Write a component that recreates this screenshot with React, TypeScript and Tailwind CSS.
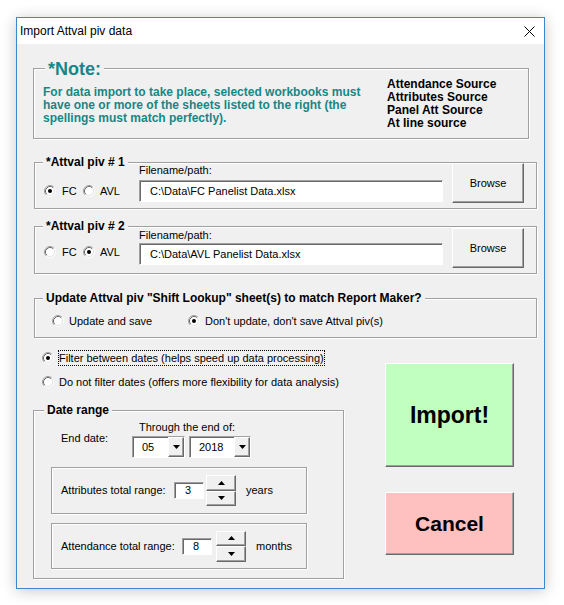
import React from "react";

const sunken =
  "border border-t-[#a0a0a0] border-l-[#a0a0a0] border-r-white border-b-white shadow-[inset_1px_1px_0_#696969]";
const raised =
  "border border-t-white border-l-white border-r-[#696969] border-b-[#696969] shadow-[inset_-1px_-1px_0_#a0a0a0]";
const etched = "border border-[#a0a0a0] shadow-[inset_1px_1px_0_#fff,1px_1px_0_#fff]";

function Radio({ checked = false }: { checked?: boolean }) {
  return (
    <svg width="12" height="12" viewBox="0 0 12 12" className="shrink-0">
      <circle cx="6" cy="6" r="4.5" fill="#fff" />
      <path d="M2.11 9.89 A5.5 5.5 0 0 1 9.89 2.11" fill="none" stroke="#a0a0a0" />
      <path d="M2.82 9.18 A4.5 4.5 0 0 1 9.18 2.82" fill="none" stroke="#696969" />
      <path d="M9.89 2.11 A5.5 5.5 0 0 1 2.11 9.89" fill="none" stroke="#ffffff" />
      <path d="M9.18 2.82 A4.5 4.5 0 0 1 2.82 9.18" fill="none" stroke="#e3e3e3" />
      {checked && <circle cx="6" cy="6" r="2" fill="#000" />}
    </svg>
  );
}

function Tri({ up = false }: { up?: boolean }) {
  return (
    <svg width="7" height="4" viewBox="0 0 7 4">
      <polygon points={up ? "0,4 7,4 3.5,0" : "0,0 7,0 3.5,4"} fill="#000" />
    </svg>
  );
}

function Combo({ value, width, pad }: { value: string; width: string; pad: string }) {
  return (
    <div className={`flex h-[22px] bg-white ${width} ${sunken}`}>
      <span className={`flex-1 leading-[20px] ${pad}`}>{value}</span>
      <div className={`flex h-full w-[16px] items-center justify-center bg-[#f0f0f0] ${raised}`}>
        <Tri />
      </div>
    </div>
  );
}

function Spin({ className }: { className: string }) {
  return (
    <div className={`flex h-[31px] w-[30px] flex-col ${className}`}>
      <div className={`flex flex-1 items-center justify-center bg-[#f0f0f0] ${raised}`}>
        <Tri up />
      </div>
      <div className={`flex flex-1 items-center justify-center bg-[#f0f0f0] ${raised}`}>
        <Tri />
      </div>
    </div>
  );
}

type FileFrameProps = {
  num: string;
  fc: boolean;
  path: string;
  box: string;
  radioTop: string;
  fieldTop: string;
};

function FileFrame({ num, fc, path, box, radioTop, fieldTop }: FileFrameProps) {
  return (
    <div className={`relative ml-[1px] w-[503px] ${etched} ${box}`}>
      <div className="absolute -top-[8px] left-[8px] bg-[#f0f0f0] px-[3px] text-[12px] font-bold leading-[14px] whitespace-nowrap">
        *Attval piv # {num}
      </div>
      <div className="flex">
        <div className={`flex h-[14px] w-[104px] items-center pl-[9px] ${radioTop}`}>
          <div className="flex w-[39px] items-center gap-[6px]">
            <Radio checked={fc} />
            FC
          </div>
          <div className="flex items-center gap-[5px]">
            <Radio checked={!fc} />
            AVL
          </div>
        </div>
        <div className="flex w-[304px] flex-col">
          <div className="leading-[14px]">Filename/path:</div>
          <div className={`h-[22px] bg-white pl-[10px] leading-[20px] ${sunken} ${fieldTop}`}>{path}</div>
        </div>
        <button className={`ml-[9px] h-[40px] w-[72px] bg-[#f0f0f0] ${raised}`}>Browse</button>
      </div>
    </div>
  );
}

export default function App() {
  return (
    <div className="h-[605px] w-[564px] bg-white pl-[16px] pt-[17px] font-['Liberation_Sans',Arial,sans-serif] text-[11px] text-black">
      <div className="flex h-[572px] w-[529px] flex-col border border-[#3c87cd] bg-[#f0f0f0] shadow-[0_2px_14px_rgba(0,0,0,0.22)]">
        {/* title bar */}
        <div className="flex h-[26px] items-center justify-between bg-white pl-[3px] pr-[9px]">
          <span className="text-[12px]">Import Attval piv data</span>
          <svg width="11" height="11" viewBox="0 0 11 11">
            <path d="M0.5 0.5 L10.5 10.5 M10.5 0.5 L0.5 10.5" stroke="#000" strokeWidth="1" />
          </svg>
        </div>

        <div className="flex flex-1 flex-col pl-[16px]">
          {/* note */}
          <div className={`relative mt-[24px] h-[71px] w-[496px] ${etched}`}>
            <div className="absolute -top-[10px] left-[11px] bg-[#f0f0f0] px-[3px] text-[18px] font-bold leading-[20px] text-[#168787]">
              *Note:
            </div>
            <div className="flex">
              <div className="w-[353px] whitespace-nowrap pl-[9px] pt-[17px] text-[12px] font-bold leading-[13px] text-[#168787]">
                For data import to take place, selected workbooks must
                <br />
                have one or more of the sheets listed to the right (the
                <br />
                spellings must match perfectly).
              </div>
              <div className="whitespace-nowrap pt-[9px] text-[12px] font-bold leading-[13px]">
                Attendance Source
                <br />
                Attributes Source
                <br />
                Panel Att Source
                <br />
                At line source
              </div>
            </div>
          </div>

          <div className="mt-[23px] h-[47px]">
            <FileFrame
              num="1"
              fc
              path={"C:\\Data\\FC Panelist Data.xlsx"}
              box="h-[47px]"
              radioTop="mt-[21px]"
              fieldTop="mt-[3px]"
            />
          </div>
          <div className="mt-[17px] h-[48px]">
            <FileFrame
              num="2"
              fc={false}
              path={"C:\\Data\\AVL Panelist Data.xlsx"}
              box="h-[48px] pt-[1px]"
              radioTop="mt-[17px]"
              fieldTop="mt-[1px]"
            />
          </div>

          {/* update */}
          <div className={`relative ml-[1px] mt-[24px] h-[40px] w-[503px] ${etched}`}>
            <div className="absolute -top-[8px] left-[8px] bg-[#f0f0f0] px-[3px] text-[12px] font-bold leading-[14px] whitespace-nowrap">
              Update Attval piv "Shift Lookup" sheet(s) to match Report Maker?
            </div>
            <div className="mt-[15px] flex h-[14px] items-center pl-[17px]">
              <div className="flex w-[136px] items-center gap-[5px]">
                <Radio />
                Update and save
              </div>
              <div className="flex items-center gap-[5px]">
                <Radio checked />
                Don't update, don't save Attval piv(s)
              </div>
            </div>
          </div>

          {/* bottom */}
          <div className="flex">
            <div className="w-[311px]">
              <div className="mt-[12px] flex h-[16px] items-center pl-[9px]">
                <Radio checked />
                <span className="ml-[4px] whitespace-nowrap border border-dotted border-black leading-[14px]">
                  Filter between dates (helps speed up data processing)
                </span>
              </div>
              <div className="mt-[8px] flex h-[16px] items-center gap-[5px] whitespace-nowrap pl-[9px]">
                <Radio />
                Do not filter dates (offers more flexibility for data analysis)
              </div>

              <div className={`relative mt-[20px] h-[169px] ${etched}`}>
                <div className="absolute -top-[8px] left-[10px] bg-[#f0f0f0] px-[3px] text-[12px] font-bold leading-[14px]">
                  Date range
                </div>
                <div className="flex">
                  <div className="ml-[27px] mt-[20px] w-[71px] leading-[14px]">End date:</div>
                  <div className="flex flex-col">
                    <div className="mt-[9px] pl-[7px] leading-[14px]">Through the end of:</div>
                    <div className="mt-[2px] flex gap-[4px]">
                      <Combo value="05" width="w-[53px]" pad="pl-[9px]" />
                      <Combo value="2018" width="w-[62px]" pad="pl-[9px]" />
                    </div>
                  </div>
                </div>

                <div className={`ml-[17px] mt-[9px] flex h-[47px] w-[256px] items-center pl-[9px] ${etched}`}>
                  <span className="w-[113px] whitespace-nowrap">Attributes total range:</span>
                  <div className={`h-[17px] w-[30px] bg-white pl-[10px] leading-[15px] ${sunken}`}>3</div>
                  <Spin className="ml-[2px]" />
                  <span className="ml-[10px]">years</span>
                </div>
                <div className={`ml-[17px] mt-[9px] flex h-[46px] w-[256px] items-center pl-[9px] ${etched}`}>
                  <span className="w-[121px] whitespace-nowrap">Attendance total range:</span>
                  <div className={`h-[17px] w-[30px] bg-white pl-[10px] leading-[15px] ${sunken}`}>8</div>
                  <Spin className="ml-[4px]" />
                  <span className="ml-[10px]">months</span>
                </div>
              </div>
            </div>

            <div className="ml-[41px] flex flex-col">
              <button className={`mt-[25px] h-[104px] w-[129px] bg-[#c0ffc0] text-[23px] font-bold ${raised}`}>
                Import!
              </button>
              <button className={`mt-[25px] h-[63px] w-[129px] bg-[#ffc0c0] text-[21px] font-bold ${raised}`}>
                Cancel
              </button>
            </div>
          </div>
        </div>
      </div>
    </div>
  );
}
